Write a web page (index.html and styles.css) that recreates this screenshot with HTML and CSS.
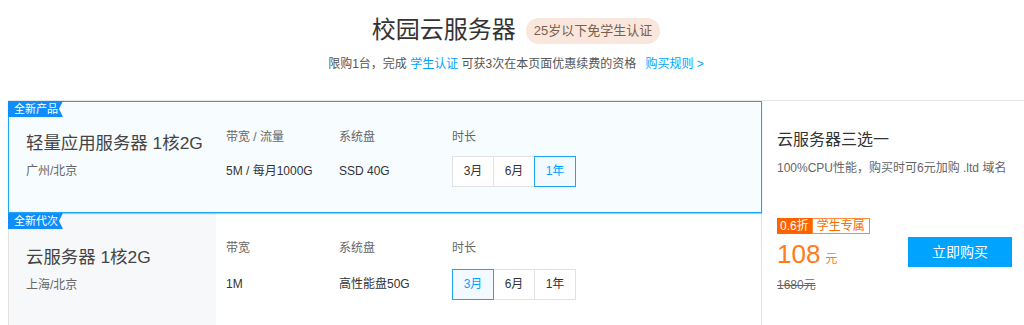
FILE: index.html
```html
<!DOCTYPE html>
<html lang="zh">
<head>
<meta charset="utf-8">
<title>校园云服务器</title>
<link rel="stylesheet" href="styles.css">
</head>
<body>
<div class="page">
  <header class="header">
    <div class="title-line">
      <h1 class="title">校园云服务器</h1>
      <span class="pill">25岁以下免学生认证</span>
    </div>
    <p class="subtitle">限购1台，完成 <a class="link">学生认证</a> 可获3次在本页面优惠续费的资格 <a class="link rule">购买规则 &gt;</a></p>
  </header>

  <section class="main">
    <div class="rows">
      <div class="row row-active">
        <span class="tag">全新产品</span>
        <div class="name-col">
          <div class="name">轻量应用服务器 1核2G</div>
          <div class="region">广州/北京</div>
        </div>
        <div class="spec">
          <div class="label">带宽 / 流量</div>
          <div class="value">5M / 每月1000G</div>
        </div>
        <div class="spec">
          <div class="label">系统盘</div>
          <div class="value">SSD 40G</div>
        </div>
        <div class="spec">
          <div class="label">时长</div>
          <div class="durations">
            <span class="dur">3月</span><span class="dur">6月</span><span class="dur dur-on">1年</span>
          </div>
        </div>
      </div>
      <div class="row row-plain">
        <span class="tag">全新代次</span>
        <div class="name-col name-col-gray">
          <div class="name">云服务器 1核2G</div>
          <div class="region">上海/北京</div>
        </div>
        <div class="spec">
          <div class="label">带宽</div>
          <div class="value">1M</div>
        </div>
        <div class="spec">
          <div class="label">系统盘</div>
          <div class="value">高性能盘50G</div>
        </div>
        <div class="spec">
          <div class="label">时长</div>
          <div class="durations">
            <span class="dur dur-on">3月</span><span class="dur">6月</span><span class="dur">1年</span>
          </div>
        </div>
      </div>
    </div>

    <aside class="side">
      <div class="side-title">云服务器三选一</div>
      <div class="side-desc">100%CPU性能，购买时可6元加购 .ltd 域名</div>
      <div class="buy">
        <div class="price-block">
          <div class="promo"><span class="promo-off">0.6折</span><span class="promo-student">学生专属</span></div>
          <div class="price"><span class="price-num">108</span><span class="price-unit">元</span></div>
          <div class="orig">1680元</div>
        </div>
        <a class="buy-btn">立即购买</a>
      </div>
    </aside>
  </section>
</div>
</body>
</html>
```

FILE: styles.css
```css
* { box-sizing: border-box; }
html, body { margin: 0; padding: 0; background: #fff; }
body {
  padding-left: 8px;
  font-family: "Liberation Sans", "Noto Sans CJK SC", sans-serif;
  color: #333;
  overflow: hidden;
}
.page { width: 1016px; }

.header { text-align: center; padding-top: 12px; }
.title-line {
  display: flex;
  justify-content: center;
  align-items: center;
  gap: 10px;
  height: 36px;
}
.title {
  margin: 0;
  font-size: 24px;
  font-weight: normal;
  line-height: 36px;
  color: #333;
}
.pill {
  display: inline-block;
  height: 26px;
  line-height: 26px;
  padding: 0 8px;
  border-radius: 13px;
  background: #f9e6dc;
  color: #7d5e4c;
  font-size: 13px;
  margin-top: 2px;
}
.subtitle {
  margin: 7px 0 0;
  font-size: 12px;
  line-height: 18px;
  color: #555;
}
.link { color: #00a4ff; text-decoration: none; }
.rule { margin-left: 6px; }

.main {
  display: flex;
  margin-top: 27px;
  border-top: 1px solid #e5e5e5;
}
.rows { width: 754px; flex: none; }
.row {
  position: relative;
  display: flex;
  height: 112px;
  border-left: 1px solid #e3e3e3;
  border-right: 1px solid #e3e3e3;
}
.row-active {
  background: #f7fcff;
  border: 1px solid #1fa3f5;
  box-shadow: 0 1px 1px rgba(0, 164, 255, 0.45);
  z-index: 1;
}
.row-plain { height: 120px; }

.tag {
  position: absolute;
  top: -1px;
  left: -1px;
  width: 55px;
  height: 16px;
  padding-left: 6px;
  font-size: 11px;
  line-height: 16px;
  color: #fff;
  background: #0f8dfa;
  white-space: nowrap;
  clip-path: polygon(0 0, 100% 0, calc(100% - 4px) 50%, 100% 100%, 0 100%);
}
.row-plain .tag { top: 0; }

.name-col {
  width: 207px;
  flex: none;
  padding: 29px 0 0 17px;
}
.row-plain .name-col { padding-top: 32px; }
.name-col-gray { background: #f7f8fa; }
.name {
  font-size: 17.4px;
  line-height: 24px;
  color: #444;
  white-space: nowrap;
}
.region {
  margin-top: 7px;
  font-size: 12px;
  line-height: 18px;
  color: #666;
}

.spec {
  width: 113px;
  flex: none;
  padding: 26px 0 0 10px;
}
.spec:last-child { width: auto; }
.label {
  font-size: 12px;
  line-height: 18px;
  color: #666;
}
.value {
  margin-top: 10px;
  font-size: 12px;
  line-height: 31px;
  color: #333;
  white-space: nowrap;
}
.row-plain .value, .row-plain .durations { margin-top: 12px; }
.durations { display: flex; margin-top: 10px; }
.dur {
  position: relative;
  width: 42px;
  height: 31px;
  line-height: 29px;
  text-align: center;
  font-size: 12px;
  color: #333;
  background: #fff;
  border: 1px solid #e2e2e2;
  margin-left: -1px;
}
.dur:first-child { margin-left: 0; }
.dur-on {
  z-index: 1;
  border-color: #1fa3f5;
  background: #f2faff;
  color: #00a4ff;
}

.side {
  flex: 1;
  padding: 27px 12px 0 15px;
}
.side-title {
  font-size: 16px;
  line-height: 24px;
  color: #333;
}
.side-desc {
  margin-top: 7px;
  font-size: 12px;
  line-height: 18px;
  color: #666;
}
.buy {
  display: flex;
  justify-content: space-between;
  align-items: flex-start;
  margin-top: 41px;
}
.promo {
  display: flex;
  height: 16px;
  font-size: 12px;
  line-height: 14px;
}
.promo-off {
  padding: 0 2px;
  background: #ff6300;
  border: 1px solid #ff6300;
  color: #fff;
}
.promo-student {
  padding: 0 4px;
  border: 1px solid #ff8a3d;
  color: #ff6a00;
  background: #fff;
}
.price {
  margin-top: 6px;
  line-height: 28px;
  color: #ff7a1a;
}
.price-num { font-size: 26px; }
.price-unit { font-size: 12px; margin-left: 5px; }
.orig {
  margin-top: 4px;
  font-size: 12px;
  line-height: 16px;
  color: #666;
  text-decoration: line-through;
}
.buy-btn {
  display: block;
  width: 104px;
  height: 30px;
  margin-top: 19px;
  line-height: 30px;
  text-align: center;
  font-size: 14px;
  color: #fff;
  background: #00a4ff;
}
```
